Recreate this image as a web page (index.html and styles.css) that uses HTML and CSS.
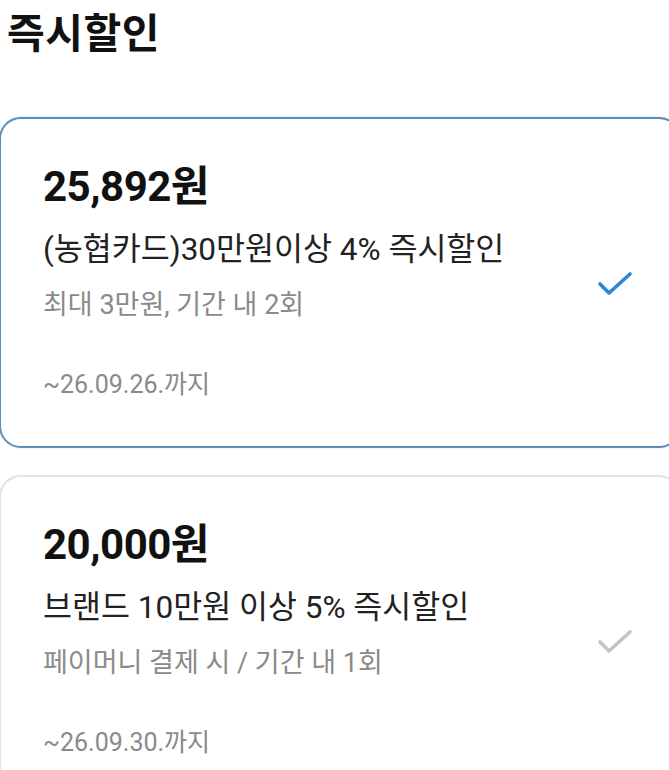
FILE: index.html
```html
<!DOCTYPE html>
<html lang="ko">
<head>
<meta charset="utf-8">
<title>즉시할인</title>
<link rel="stylesheet" href="styles.css">
</head>
<body>
<main class="page">
  <h1 class="title">즉시할인</h1>
  <ul class="coupons">
    <li class="card card--selected">
      <div class="card-body">
        <div class="price">25,892원</div>
        <div class="desc">(농협카드)30만원이상 4% 즉시할인</div>
        <div class="sub">최대 3만원, 기간 내 2회</div>
        <div class="date">~26.09.26.까지</div>
      </div>
      <svg class="check" width="36" height="28" viewBox="0 0 36 28" aria-hidden="true">
        <path d="M3 14 L12 23 L33 4" fill="none" stroke-width="3.6" stroke-linecap="round" stroke-linejoin="round"/>
      </svg>
    </li>
    <li class="card">
      <div class="card-body">
        <div class="price">20,000원</div>
        <div class="desc">브랜드 10만원 이상 5% 즉시할인</div>
        <div class="sub">페이머니 결제 시 / 기간 내 1회</div>
        <div class="date">~26.09.30.까지</div>
      </div>
      <svg class="check" width="36" height="28" viewBox="0 0 36 28" aria-hidden="true">
        <path d="M3 14 L12 23 L33 4" fill="none" stroke-width="3.6" stroke-linecap="round" stroke-linejoin="round"/>
      </svg>
    </li>
  </ul>
</main>
</body>
</html>
```

FILE: styles.css
```css
* { box-sizing: border-box; }
html, body { margin: 0; padding: 0; background: #fff; overflow: hidden; }
body {
  font-family: Roboto, "Noto Sans CJK KR", sans-serif;
  color: #111;
}
.page { width: 669px; }
.title {
  margin: 0;
  padding: 4px 0 0 7px;
  font-family: "Noto Sans CJK KR", sans-serif;
  font-size: 41px;
  font-weight: 700;
  line-height: 52px;
  letter-spacing: 0.5px;
  color: #111;
}
.coupons {
  list-style: none;
  margin: 61px -12px 0 -1px;
  padding: 0;
  display: flex;
  flex-direction: column;
  gap: 27px;
}
.card {
  display: flex;
  align-items: center;
  justify-content: space-between;
  border: 2px solid #e2e2e2;
  border-radius: 22px;
  padding: 44px 46px 45px 42px;
}
.card--selected {
  border-color: #5a8eb8;
  box-shadow: 0 0 2px rgba(120, 190, 235, 0.5);
}
.card-body { display: flex; flex-direction: column; }
.price {
  font-size: 42px;
  font-weight: 700;
  line-height: 48px;
  letter-spacing: -0.5px;
  color: #111;
}
.desc {
  margin-top: 21px;
  font-size: 31.5px;
  line-height: 36px;
  color: #222;
}
.sub {
  margin-top: 21px;
  font-size: 27px;
  line-height: 32px;
  color: #8a8a8a;
}
.date {
  margin-top: 48px;
  font-size: 25px;
  line-height: 32px;
  color: #8a8a8a;
}
.check { flex: none; stroke: #c4c4c4; margin-top: 4px; }
.card--selected .check { stroke: #2a86d6; }
```
